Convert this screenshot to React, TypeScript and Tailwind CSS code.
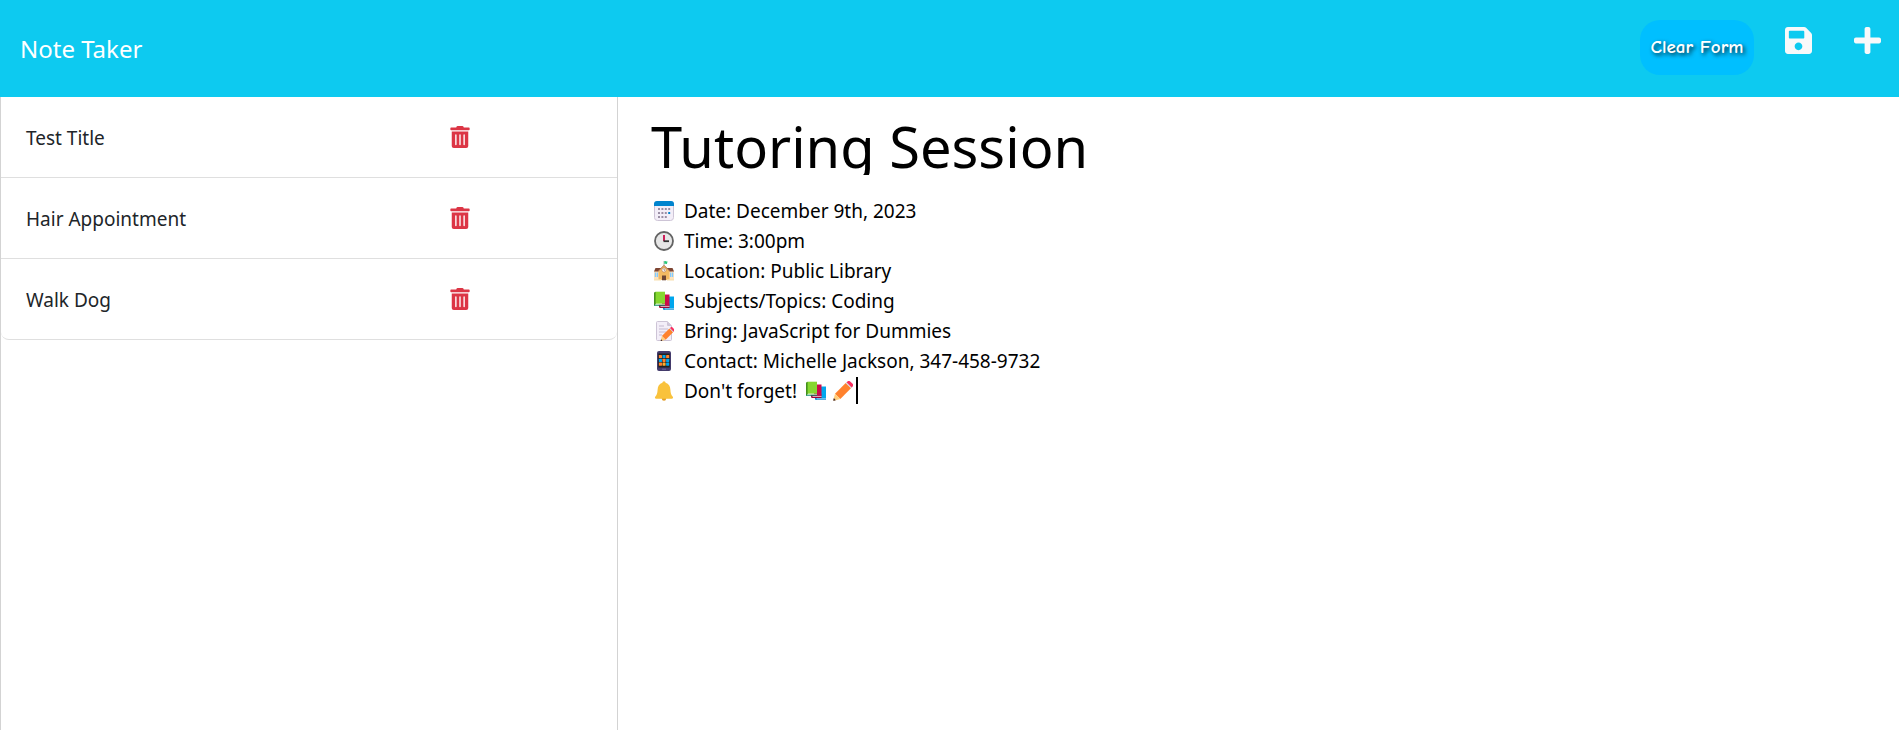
import type { ReactNode } from "react";
import { FaPlus, FaSave, FaTrashAlt } from "react-icons/fa";

const notes = ["Test Title", "Hair Appointment", "Walk Dog"];

const details = [
  "Date: December 9th, 2023",
  "Time: 3:00pm",
  "Location: Public Library",
  "Subjects/Topics: Coding",
  "Bring: JavaScript for Dummies",
  "Contact: Michelle Jackson, 347-458-9732",
  "Don't forget!",
].join("\n");

function Glyph({ children }: { children: ReactNode }) {
  return (
    <svg viewBox="0 0 20 20" className="size-5 shrink-0" aria-hidden="true">
      {children}
    </svg>
  );
}

function CalendarGlyph() {
  return (
    <Glyph>
      <rect x="0.5" y="0.5" width="19" height="19" rx="3" fill="#f3eef8" stroke="#cdc4d6" />
      <path d="M0 5V3a3 3 0 0 1 3-3h14a3 3 0 0 1 3 3v2z" fill="#0084ce" />
      {[8, 12, 16].map((y) =>
        [5, 8.4, 11.8, 15.2].map((x) => (
          <rect
            key={`${x}-${y}`}
            x={x - 1}
            y={y - 1}
            width="2"
            height="2"
            rx="0.3"
            fill={x === 15.2 && y === 12 ? "#0084ce" : x === 15.2 && y === 16 ? "#f3eef8" : "#998ea4"}
          />
        )),
      )}
    </Glyph>
  );
}

function ClockGlyph() {
  return (
    <Glyph>
      <circle cx="10" cy="10" r="9" fill="#e6e6e6" stroke="#636363" strokeWidth="1.8" />
      <path d="M10 4v6" stroke="#ca0b4a" strokeWidth="1.8" />
      <path d="M9.5 10.2H15" stroke="#333" strokeWidth="1.8" />
    </Glyph>
  );
}

function SchoolGlyph() {
  return (
    <Glyph>
      <rect y="10" width="20" height="9" fill="#ffe3bd" />
      <path d="M1.5 7h17l1.5 3.5H0z" fill="#7d4533" />
      <path d="M4.5 10 10 4l5.5 6V19h-11z" fill="#f3ba63" />
      <path d="m4 10.3 6-6 6 6" fill="none" stroke="#a56953" strokeWidth="0.9" />
      <path d="M10 0v4.5" stroke="#9b9b9b" strokeWidth="0.8" />
      <path d="M10.3.2c1.5-.7 2 .8 3.3 0L13 2.8c-1 .6-1.7-.4-2.7.1z" fill="#26c879" />
      <circle cx="10" cy="9" r="2.1" fill="#fff" stroke="#a56953" strokeWidth="0.5" />
      <path d="M10 7.7v1.5h1" fill="none" stroke="#6d4534" strokeWidth="0.6" />
      <rect x="8" y="14.5" width="4" height="4.8" fill="#6d4534" />
      <path d="M.8 11.5h1.3V16H.8zm1.9 0H4V16H2.7zm13.3 0h1.3V16H16zm1.9 0h1.3V16h-1.3z" fill="#83cbff" />
      <path d="M0 18.2h7v1.3H0zm13 0h7v1.3h-7z" fill="#f7dfb0" />
    </Glyph>
  );
}

function BooksGlyph() {
  return (
    <Glyph>
      <path d="M8.5 16 14 6h6v13H9.5z" fill="#0084ce" />
      <path d="M11 5.5h9v12h-9z" fill="#00a6ed" />
      <path d="M10.5 17.5H20v.9h-9.5z" fill="#d3edfb" />
      <path d="M4.5 13.5h11V17h-10z" fill="#990838" />
      <path d="M8 3.5h7.5v11H8z" fill="#ca0b4a" />
      <path d="M6.5 14.9h9v.9h-9z" fill="#f3c7d6" />
      <path d="M0 1.5 2 .7v12.8L0 14.7z" fill="#44911b" />
      <path d="M1.6.7H11v12H1.6z" fill="#86d72f" />
      <path d="M1.2 12.9H11v.9H1.2z" fill="#d8f2cb" />
      <path d="M0 13.8h11v.9H0z" fill="#008463" />
    </Glyph>
  );
}

function PencilShape() {
  return (
    <>
      <path d="M2 12.7 12.7 2 18 7.3 7.3 18z" fill="#ff822d" />
      <path d="M12.7 2 14 .8 19.2 6 18 7.3z" fill="#d3d3d3" />
      <path d="m13.6 1.2.9-.8c.8-.7 1.900-.7 2.700 0l2.400 2.400c.8.800.8 1.900 0 2.700l-.8.9z" fill="#f92f60" />
      <path d="M2 12.7 7.3 18 1 19.800c-.6.200-.9-.1-.7-.7z" fill="#ffce7c" />
      <path d="m.9 17.1 1.900 2.200-1.800.5c-.6.200-.9-.1-.7-.7z" fill="#402a32" />
    </>
  );
}

function PencilGlyph() {
  return (
    <Glyph>
      <PencilShape />
    </Glyph>
  );
}

function MemoGlyph() {
  return (
    <Glyph>
      <path d="M3.5.5h9.8l4.2 4.2v13.8a1 1 0 0 1-1 1h-13a1 1 0 0 1-1-1v-17a1 1 0 0 1 1-1z" fill="#f3eef8" stroke="#cdc4d6" />
      <path d="M13 .5v3.6a1 1 0 0 0 1 1h3.5z" fill="#cdc4d6" />
      <path d="M5 5h5M5 8h9M5 11h7M5 14h3" stroke="#c4b9cf" strokeWidth="1" />
      <g transform="translate(6.5 6.2) scale(0.7)">
        <PencilShape />
      </g>
    </Glyph>
  );
}

function PhoneGlyph() {
  const tiles = ["#ff822d", "#00a6ed", "#ff822d", "#00a6ed", "#ff822d", "#00a6ed", "#ff822d", "#ffb02e", "#00a6ed"];
  return (
    <Glyph>
      <rect x="3" y="0" width="14" height="20" rx="2" fill="#433b6b" />
      <rect x="4.2" y="2.5" width="11.6" height="14" fill="#212121" />
      {tiles.map((fill, i) => (
        <rect key={i} x={4.9 + (i % 3) * 3.6} y={4 + Math.floor(i / 3) * 3.8} width="3.1" height="3.1" rx="0.4" fill={fill} />
      ))}
      <path d="M8 18.2h4" stroke="#7b6fae" strokeWidth="0.8" />
    </Glyph>
  );
}

function BellGlyph() {
  return (
    <Glyph>
      <circle cx="10" cy="17.6" r="2.2" fill="#e39d27" />
      <path d="M8.4 1.8a1.6 1.6 0 0 1 3.2 0c3.2.8 4.6 3.4 4.8 7 .2 3.4.7 5.2 2.2 6.8.9 1 .5 2.2-.9 2.2H2.3c-1.4 0-1.8-1.2-.9-2.2 1.5-1.6 2-3.4 2.2-6.8.2-3.6 1.6-6.2 4.8-7z" fill="#f9c23c" />
    </Glyph>
  );
}

const lineGlyphs = [CalendarGlyph, ClockGlyph, SchoolGlyph, BooksGlyph, MemoGlyph, PhoneGlyph, BellGlyph];

function Header() {
  return (
    <header className="flex h-[97px] shrink-0 items-start justify-between bg-[#0dcaf0] pr-[18px] pl-5">
      <a href="#" className="pt-8 text-[24px] leading-[34px] text-white">
        Note Taker
      </a>
      <div className="flex items-start pt-5">
        <button
          type="button"
          className="h-[55px] w-[114px] rounded-[20px] bg-[#00bfff] font-['Comic_Neue','Comic_Sans_MS',Lato,cursive] text-[19px] font-bold whitespace-nowrap text-white [text-shadow:2px_2px_4px_rgb(0_0_0/0.8)]"
        >
          Clear Form
        </button>
        <button type="button" aria-label="Save note" className="mt-[5px] ml-[31px] text-[#f8f9fa]">
          <FaSave className="h-[31px] w-[27px]" />
        </button>
        <button type="button" aria-label="New note" className="mt-[5px] ml-[42px] text-[#f8f9fa]">
          <FaPlus className="h-[31px] w-[27px]" />
        </button>
      </div>
    </header>
  );
}

function NoteList() {
  return (
    <aside className="flex w-1/3 pr-[15px]">
      <div className="grow border-x border-[#d3d3d3]">
        <ul>
          {notes.map((note) => (
            <li
              key={note}
              className="flex h-[81px] items-center justify-between border-b border-[#dfdfdf] pt-0.5 pr-[147px] pl-[25px] last:rounded-b-lg"
            >
              <span className="text-[19px] leading-[30px] text-[#212529]">{note}</span>
              <button type="button" aria-label={`Delete ${note}`} className="text-[#dc3545]">
                <FaTrashAlt className="mb-0.5 h-[22px] w-5" />
              </button>
            </li>
          ))}
        </ul>
      </div>
    </aside>
  );
}

function NoteEditor() {
  return (
    <main className="min-w-0 flex-1 pt-5 pr-5 pl-[18px]">
      <input
        aria-label="Note title"
        defaultValue="Tutoring Session"
        className="block h-[58px] w-full overflow-hidden text-[56px] leading-[58px] text-black outline-none"
      />
      <div className="relative mt-[21px] flex gap-[10px] pl-[3px]">
        <div className="flex flex-col gap-[10px] pt-[5px]">
          {lineGlyphs.map((LineGlyph, i) => (
            <LineGlyph key={i} />
          ))}
        </div>
        <textarea
          aria-label="Note text"
          rows={7}
          defaultValue={details}
          className="block h-[210px] grow resize-none overflow-hidden text-[19px] leading-[30px] text-black outline-none"
        />
        <div className="absolute bottom-0 left-[155px] flex h-[30px] items-center gap-[7px]">
          <BooksGlyph />
          <PencilGlyph />
          <span className="mb-0.5 -ml-1 h-[27px] w-0.5 bg-black" />
        </div>
      </div>
    </main>
  );
}

export default function App() {
  return (
    <div className="flex min-h-screen flex-col bg-white font-['Segoe_UI','Noto_Sans',sans-serif]">
      <Header />
      <div className="flex grow">
        <NoteList />
        <NoteEditor />
      </div>
    </div>
  );
}
